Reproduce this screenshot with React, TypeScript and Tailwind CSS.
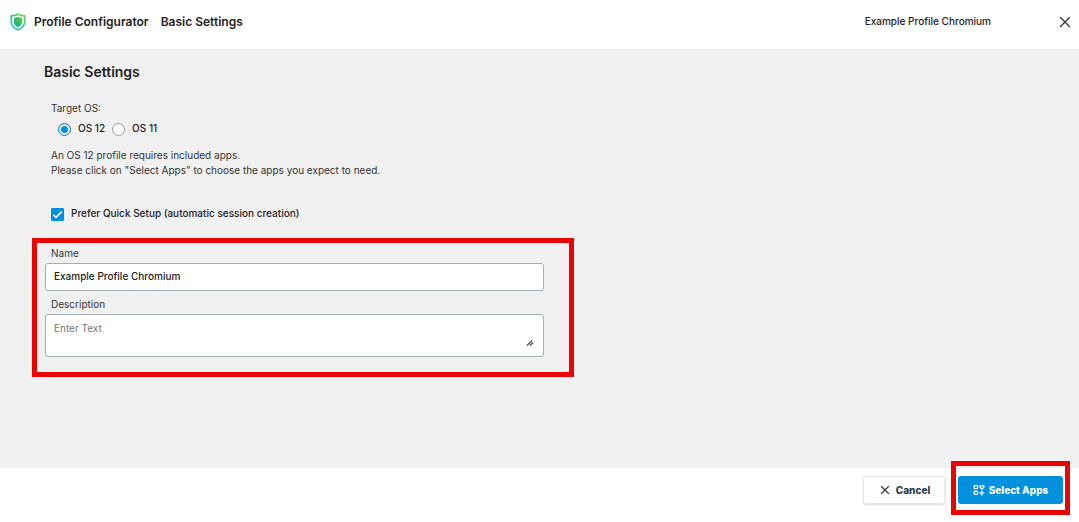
import { useState } from "react";
import { X } from "lucide-react";

const osVersions = ["OS 12", "OS 11"];

function ShieldLogo() {
  return (
    <svg width="16" height="18" viewBox="0 0 16 18" fill="none" aria-hidden="true">
      <defs>
        <linearGradient id="shield-edge" x1="16" y1="0" x2="3" y2="17" gradientUnits="userSpaceOnUse">
          <stop stopColor="#8ed634" />
          <stop offset="0.5" stopColor="#3cc781" />
          <stop offset="1" stopColor="#22b9d8" />
        </linearGradient>
        <linearGradient id="shield-core" x1="12" y1="4" x2="5" y2="13" gradientUnits="userSpaceOnUse">
          <stop stopColor="#5fd03c" />
          <stop offset="1" stopColor="#12b28c" />
        </linearGradient>
      </defs>
      <path
        d="M8 1.2C6.2 2.3 3.8 2.8 1.2 2.9V8.2C1.2 12.2 4 15.2 8 16.8C12 15.2 14.8 12.2 14.8 8.2V2.9C12.2 2.8 9.8 2.3 8 1.2Z"
        stroke="url(#shield-edge)"
        strokeWidth="1.6"
        strokeLinejoin="round"
      />
      <path
        d="M8 3.8C6.8 4.5 5.4 4.8 3.8 4.9V8.4C3.8 11 5.5 13 8 14.2C10.5 13 12.2 11 12.2 8.4V4.9C10.6 4.8 9.2 4.5 8 3.8Z"
        fill="url(#shield-core)"
      />
    </svg>
  );
}

function AppsIcon() {
  return (
    <svg width="12" height="12" viewBox="0 0 12 12" fill="none" stroke="currentColor" strokeWidth="1.3" aria-hidden="true">
      <rect x="1.2" y="1.6" width="3.4" height="3" rx="0.6" />
      <path d="M7.2 1.6H10.8V3.4L9 5L7.2 3.4Z" strokeLinejoin="round" />
      <rect x="1.2" y="7.4" width="3.4" height="3" rx="0.6" />
      <path d="M8.8 6.4V11.4M6.3 8.9H11.3" />
    </svg>
  );
}

function Header({ profileName }: { profileName: string }) {
  return (
    <header className="flex h-[49px] items-start bg-white pt-3 pr-1 pl-[10px]">
      <div className="flex items-center">
        <ShieldLogo />
        <span className="ml-2 text-[12px] leading-5 font-semibold">Profile Configurator</span>
        <span className="ml-3 text-[12px] leading-5 font-semibold">Basic Settings</span>
      </div>
      <div className="ml-auto flex items-start gap-16">
        <span className="leading-[18px] font-medium">{profileName}</span>
        <button type="button" aria-label="Close" className="flex size-5 items-center justify-center text-[#2b3a45]">
          <X size={18} strokeWidth={1.8} />
        </button>
      </div>
    </header>
  );
}

export default function App() {
  const [os, setOs] = useState("OS 12");
  const [quickSetup, setQuickSetup] = useState(true);
  const [name, setName] = useState("Example Profile Chromium");
  const [description, setDescription] = useState("");

  return (
    <div className="flex min-h-screen flex-col bg-white font-['Inter',sans-serif] text-[10px] leading-4 text-[#222]">
      <Header profileName="Example Profile Chromium" />

      <main className="flex-1 bg-[#f1f1f1] px-8 pt-[13px] pb-4">
        <h1 className="ml-3 text-[14px] leading-5 font-semibold">Basic Settings</h1>

        <div className="mt-[18px] ml-[19px]">
          <fieldset>
            <legend className="text-[#333]">Target OS:</legend>
            <div className="mt-1 ml-[7px] flex gap-[7px] font-medium">
              {osVersions.map((version) => (
                <label key={version} className="flex items-center gap-[7px]">
                  <input
                    type="radio"
                    name="os"
                    checked={os === version}
                    onChange={() => setOs(version)}
                    className="mt-[2px] size-[13px] appearance-none rounded-full border border-[#8f9ba6] bg-white checked:border-[#0090dd] checked:bg-[#0090dd] checked:shadow-[inset_0_0_0_2px_white]"
                  />
                  {version}
                </label>
              ))}
            </div>
          </fieldset>

          <p className="mt-3 leading-[15px] text-[#333]">
            An OS 12 profile requires included apps.
            <br />
            Please click on "Select Apps" to choose the apps you expect to need.
          </p>

          <label className="mt-[27px] flex items-center gap-[7px] font-medium">
            <span className="relative mt-[2px] size-[13px]">
              <input
                type="checkbox"
                checked={quickSetup}
                onChange={(e) => setQuickSetup(e.target.checked)}
                className="peer block size-[13px] appearance-none rounded-[1px] border border-[#8f9ba6] bg-white checked:border-[#0090dd] checked:bg-[#0090dd]"
              />
              <svg
                viewBox="0 0 13 13"
                fill="none"
                stroke="white"
                strokeWidth="1.5"
                className="pointer-events-none absolute inset-0 hidden peer-checked:block"
              >
                <path d="M2.2 6.8L5 9.4L10.8 3.6" />
              </svg>
            </span>
            Prefer Quick Setup (automatic session creation)
          </label>
        </div>

        <section className="mt-[17px] max-w-[542px] border-[5px] border-[#ea0303] px-2 pt-[2px] pb-[15px]">
          <label htmlFor="name" className="ml-[6px] block text-[#333]">
            Name
          </label>
          <div className="mt-[2px] pr-[17px]">
            <input
              id="name"
              type="text"
              value={name}
              onChange={(e) => setName(e.target.value)}
              className="block h-7 w-full rounded-[3px] border border-[#a3adb5] bg-white px-2 pb-[2px] font-medium outline-none"
            />
          </div>
          <label htmlFor="description" className="mt-[5px] ml-[6px] block text-[#333]">
            Description
          </label>
          <div className="mt-[2px] pr-[17px]">
            <div className="relative">
              <textarea
                id="description"
                placeholder="Enter Text"
                value={description}
                onChange={(e) => setDescription(e.target.value)}
                className="block h-[43px] w-full resize-none rounded-[3px] border border-[#a3adb5] bg-white px-2 py-[5px] outline-none placeholder:text-[#757575]"
              />
              {/* resize grip */}
              <svg
                width="8"
                height="8"
                viewBox="0 0 8 8"
                fill="none"
                stroke="#444"
                strokeWidth="1.2"
                className="pointer-events-none absolute right-[10px] bottom-[10px]"
              >
                <path d="M1 6.5L6 1.5M4 6.5L7 3.5" />
              </svg>
            </div>
          </div>
        </section>
      </main>

      <footer className="flex h-[54px] items-start justify-end gap-[13px] bg-white pt-2 pr-4">
        <button
          type="button"
          className="flex h-7 w-[82px] items-center justify-center gap-1 rounded-[3px] border border-[#e8e8e8] bg-white font-extrabold text-[#2b3a45] shadow-[0_1px_2px_rgba(0,0,0,0.15)]"
        >
          <X size={14} strokeWidth={2} />
          Cancel
        </button>
        <div className="relative">
          <button
            type="button"
            className="flex h-7 w-[105px] items-center justify-center gap-1 rounded-[3px] bg-[#0090dd] font-extrabold text-white"
          >
            <AppsIcon />
            Select Apps
          </button>
          {/* highlight frame */}
          <span className="pointer-events-none absolute -inset-x-[7px] -top-[15px] -bottom-[11px] border-[5px] border-[#ea0303]" />
        </div>
      </footer>
    </div>
  );
}
